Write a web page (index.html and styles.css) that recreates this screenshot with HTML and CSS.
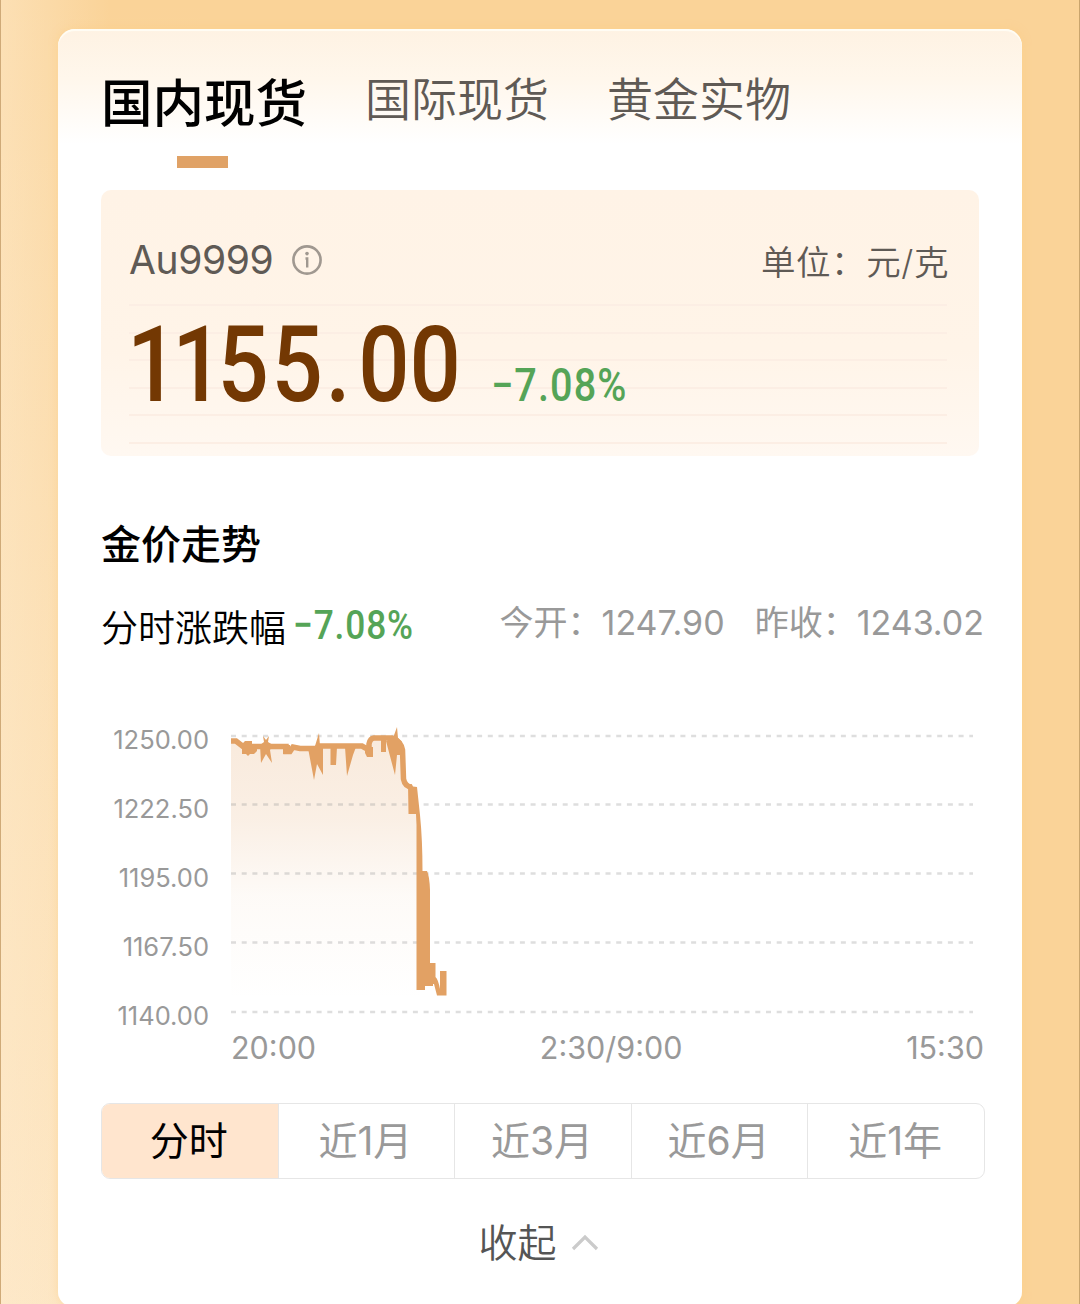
FILE: index.html
```html
<!DOCTYPE html>
<html lang="zh-CN">
<head>
    <meta charset="UTF-8">
    <meta name="viewport" content="width=device-width, initial-scale=1.0">
    <title>金价走势</title>
    <link rel="stylesheet" href="styles.css">
</head>
<body>
    <main class="card">
        <nav class="tabs">
            <a class="tab active">国内现货</a>
            <a class="tab">国际现货</a>
            <a class="tab">黄金实物</a>
        </nav>

        <!-- current price -->
        <section class="price-box">
            <div class="price-head">
                <span class="code">Au9999</span>
                <svg class="info" width="32" height="32" viewBox="0 0 32 32">
                    <circle cx="16" cy="16" r="13.6" fill="none" stroke="#a09890" stroke-width="2.6"/>
                    <circle cx="16" cy="9.6" r="1.8" fill="#a09890"/>
                    <path d="M14.500 14.500h1.700v9" fill="none" stroke="#a09890" stroke-width="2.4"/>
                </svg>
                <span class="unit">单位：元/克</span>
            </div>
            <div class="price-row">
                <span class="price"><span class="ones">11</span><span class="fives">55</span><span class="dot">.</span>00</span>
                <span class="change">−7.08%</span>
            </div>
        </section>

        <h2>金价走势</h2>
        <div class="summary">
            <span class="label">分时涨跌幅</span>
            <span class="change small">−7.08%</span>
            <span class="quote open">今开：1247.90</span>
            <span class="quote">昨收：1243.02</span>
        </div>

        <!-- chart -->
        <div class="chart">
            <div class="y-axis">
                <span>1250.00</span>
                <span>1222.50</span>
                <span>1195.00</span>
                <span>1167.50</span>
                <span>1140.00</span>
            </div>
            <svg class="plot" width="743" height="300" viewBox="231 720 743 300">
                <defs>
                    <linearGradient id="fade" x1="0" y1="740" x2="0" y2="1000" gradientUnits="userSpaceOnUse">
                        <stop offset="0" stop-color="#e3a163" stop-opacity="0.22"/>
                        <stop offset="0.3" stop-color="#e3a163" stop-opacity="0.17"/>
                        <stop offset="0.6" stop-color="#e3a163" stop-opacity="0.05"/>
                        <stop offset="1" stop-color="#e3a163" stop-opacity="0"/>
                    </linearGradient>
                </defs>
                <path class="area" fill="url(#fade)" d="M231 741H236L243 747H370V740H398L403 780L408 787L415 790L420 850V1000H231Z"/>
                <g class="grid">
                    <path d="M231 736H973"/>
                    <path d="M231 804.500H973"/>
                    <path d="M231 873.500H973"/>
                    <path d="M231 942.500H973"/>
                    <path d="M231 1012H973"/>
                </g>
                <path class="line" d="M231 741H236L243 746.5H286V751.5H290L293 747L300 748.5H316L319 746H362L369 750V744Q370 738.5 374 738H392Q401 741 402.5 750L403.5 779Q405 787 412 787"/>
                <path class="fill" d="M242 744L245 741H252V744H257V751L254 754H250L248 756L246 754H242Z
                    M260 745L264 742L263 736L266 740L269 736L268 742L273 745L270 750L272 763L266 754L261 763Z
                    M283 745H290V754H283Z
                    M308 748L314 780L317 764L323 775V748Z M315 746L319 733L320 746Z
                    M330.500 747H337L336 765H330.500Z M345 747H356L353 755L347 776Z
                    M365 747H373V757H367L365 753Z M381 738H386V752H381Z
                    M386 741L395 775L397 755H401L402 742L398 738L397 727L393 738Z"/>
                <path class="fill" d="M408 784.500H412L413 786.500L417 787L420 815Q422.500 840 422.500 871H427Q429.500 876 430 890V963H435.500V977Q438 979 440 989V971H446.500V995.500H437L434 984H433V986H425V990H416.500V825L416 814H408.500Z"/>
            </svg>
        </div>
        <div class="x-axis">
            <span>20:00</span>
            <span>2:30/9:00</span>
            <span>15:30</span>
        </div>

        <div class="range">
            <button class="active">分时</button>
            <button>近1月</button>
            <button>近3月</button>
            <button>近6月</button>
            <button>近1年</button>
        </div>

        <div class="collapse">
            收起
            <svg width="28" height="18" viewBox="0 0 28 18">
                <path d="M2 16L14 4L26 16" fill="none" stroke="#cbcbcb" stroke-width="3.2"/>
            </svg>
        </div>
    </main>
</body>
</html>
```

FILE: styles.css
```css
* {
    box-sizing: border-box;
}
body {
    margin: 0;
    height: 1304px;
    padding: 29px 57px 0;
    overflow: hidden;
    font-family: Inter, "Noto Sans CJK SC", sans-serif;
    background:
        linear-gradient(90deg, rgba(254, 236, 208, 0.5), rgba(254, 236, 208, 0) 110px),
        linear-gradient(rgba(253, 232, 200, 0), rgba(253, 232, 200, 0.85)) 0 0 / 200px 100% no-repeat,
        #fad398;
    border-left: 1px solid #cfaa78;
    border-right: 1px solid #c9a56d;
}
.card {
    height: 1277px;
    padding: 0 38px 0 43px;
    border-radius: 17px 17px 14px 14px;
    background: linear-gradient(#fef2e3, #fff7ec 50px, #fff 115px);
    box-shadow: inset 0 2px 1px #fffdf5, 0 0 8px rgba(255, 205, 130, 0.5);
}

/* tabs */
.tabs {
    display: flex;
    gap: 58px;
    height: 161px;
    padding-top: 39px;
}
.tab {
    height: 64px;
    line-height: 63px;
    font-size: 46px;
    font-weight: 350;
    color: #5f5a55;
}
.tab.active {
    height: 100px;
    line-height: 70px;
    font-size: 51.5px;
    font-weight: 500;
    color: #000;
}
.tab.active::after {
    content: "";
    display: block;
    width: 51px;
    height: 12px;
    margin: 18px 0 0 76px;
    background: #e0a266;
}

/* price box */
.price-box {
    width: 878px;
    height: 266px;
    padding: 44px 30px 0 28px;
    border-radius: 10px;
    background:
        repeating-linear-gradient(#fceee4 0 2px, transparent 2px 27.5px) 28px 114px / 818px 140px no-repeat,
        linear-gradient(#fff3e6, #fff4e8 60%, #fff8f1);
}
.price-head {
    display: flex;
    align-items: center;
    height: 52px;
}
.code {
    font-size: 39px;
    line-height: 52px;
    letter-spacing: -0.4px;
    color: #5f5a55;
}
.info {
    margin: -1px 0 0 18px;
}
.unit {
    margin-left: auto;
    font-size: 34.5px;
    font-weight: 350;
    letter-spacing: 0.6px;
    color: #5f5a55;
}
.price-row {
    display: flex;
    align-items: baseline;
    height: 120px;
    font-family: Roboto, sans-serif;
    font-weight: 500;
}
.price {
    width: 364px;
    margin-left: -2px;
    font-size: 105px;
    line-height: 159px;
    color: #733803;
    white-space: nowrap;
    transform: scaleX(0.86);
    transform-origin: 0 50%;
}
.ones {
    letter-spacing: -7px;
}
.fives {
    letter-spacing: 3px;
}
.dot {
    letter-spacing: 9px;
}
.change {
    font-family: Roboto, sans-serif;
    font-size: 46px;
    font-weight: 500;
    letter-spacing: 1.3px;
    color: #55a457;
    white-space: nowrap;
    transform: scaleX(0.86);
    transform-origin: 0 50%;
}

/* trend */
h2 {
    height: 60px;
    margin: 59px 0 0;
    font-size: 40px;
    font-weight: 500;
    line-height: 60px;
    color: #000;
}
.summary {
    display: flex;
    align-items: center;
    height: 60px;
    margin-top: 21px;
    white-space: nowrap;
}
.label {
    font-size: 37px;
    font-weight: 350;
    color: #000;
}
.change.small {
    width: 120px;
    margin: -2px 0 0 7px;
    font-size: 41px;
    letter-spacing: 1px;
}
.quote {
    padding-bottom: 12px;
    font-size: 34px;
    color: #999;
}
.quote.open {
    margin: 0 30px 0 auto;
}

/* chart */
.chart {
    display: flex;
    margin-top: 64px;
}
.y-axis {
    display: flex;
    flex-direction: column;
    width: 108px;
    margin: -15px 22px 0 0;
    text-align: right;
    font-size: 25.5px;
    line-height: 69px;
    color: #999;
}
.plot {
    flex: none;
}
.line {
    fill: none;
    stroke: #e2a164;
    stroke-width: 5.5;
}
.fill {
    fill: #e2a164;
}
.grid path {
    fill: none;
    stroke: #999;
    stroke-opacity: 0.32;
    stroke-width: 2.6;
    stroke-dasharray: 5 5.7;
}
.x-axis {
    display: flex;
    justify-content: space-between;
    width: 753px;
    height: 40px;
    margin: -22px 0 0 130px;
    font-size: 30.5px;
    line-height: 40px;
    color: #999;
}

/* range buttons */
.range {
    display: flex;
    width: 884px;
    height: 76px;
    margin-top: 35px;
    border: 1.5px solid #e6e6e6;
    border-radius: 9px;
    overflow: hidden;
}
.range button {
    flex: 1;
    padding: 0 2px 7px 0;
    border: 0;
    border-left: 1.5px solid #e6e6e6;
    background: none;
    font-family: inherit;
    font-size: 39px;
    color: #999;
}
.range .active {
    border: 0;
    background: #ffe5ce;
    color: #000;
}
.collapse {
    display: flex;
    align-items: center;
    justify-content: center;
    gap: 14px;
    height: 60px;
    margin: 31px 8px 0 0;
    font-size: 39px;
    font-weight: 350;
    color: #555;
}
.collapse svg {
    margin-top: 4px;
}
```
